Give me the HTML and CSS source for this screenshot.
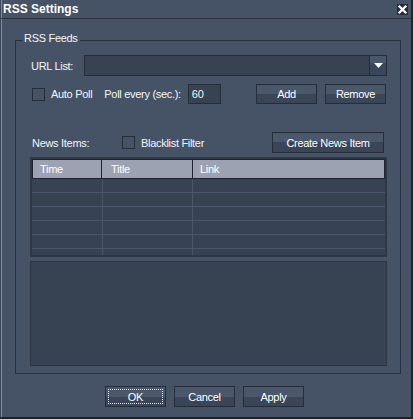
FILE: index.html
```html
<!DOCTYPE html>
<html>
<head>
<meta charset="utf-8">
<title>RSS Settings</title>
<link rel="stylesheet" href="styles.css">
</head>
<body>
<div class="window">
  <div class="titlebar">
    <span class="title">RSS Settings</span>
    <span class="close"><svg width="11" height="11" viewBox="0 0 11 11"><path d="M2.5 2.5 L8.5 8.5 M8.5 2.5 L2.5 8.5" stroke="#fff" stroke-width="2.2" stroke-linecap="square"/></svg></span>
  </div>
  <fieldset class="group">
    <legend class="legend">RSS Feeds</legend>
    <div class="group-body">
      <div class="row row-url">
        <span class="url-label">URL List:</span>
        <div class="combo">
          <div class="combo-field"></div>
          <div class="combo-btn"><svg width="9" height="5" viewBox="0 0 9 5"><polygon points="0,0 9,0 4.5,5" fill="#fff"/></svg></div>
        </div>
      </div>
      <div class="row row-poll">
        <span class="check"></span>
        <span class="check-label">Auto Poll</span>
        <span class="poll-label">Poll every (sec.):</span>
        <span class="num">60</span>
        <span class="btn btn-add">Add</span>
        <span class="btn btn-remove">Remove</span>
      </div>
      <div class="row row-news">
        <span class="news-label">News Items:</span>
        <span class="check"></span>
        <span class="check-label">Blacklist Filter</span>
        <span class="btn btn-create">Create News Item</span>
      </div>
      <div class="grid">
        <div class="grid-head">
          <div class="h-cell h-time">Time</div>
          <div class="h-cell h-title">Title</div>
          <div class="h-cell h-link">Link</div>
        </div>
        <div class="grid-row"><div class="c c1"></div><div class="c c2"></div><div class="c c3"></div></div>
        <div class="grid-row"><div class="c c1"></div><div class="c c2"></div><div class="c c3"></div></div>
        <div class="grid-row"><div class="c c1"></div><div class="c c2"></div><div class="c c3"></div></div>
        <div class="grid-row"><div class="c c1"></div><div class="c c2"></div><div class="c c3"></div></div>
        <div class="grid-row"><div class="c c1"></div><div class="c c2"></div><div class="c c3"></div></div>
        <div class="grid-fill"><div class="c c1"></div><div class="c c2"></div><div class="c c3"></div></div>
      </div>
      <div class="panel"></div>
    </div>
  </fieldset>
  <div class="actions">
    <span class="btn btn-ok">OK</span>
    <span class="btn">Cancel</span>
    <span class="btn">Apply</span>
  </div>
</div>
</body>
</html>
```

FILE: styles.css
```css
* { box-sizing: border-box; }
html, body { margin: 0; padding: 0; }
body {
  width: 413px;
  height: 419px;
  overflow: hidden;
  background: #465366;
  font-family: "Liberation Sans", Arial, sans-serif;
  font-size: 11px;
  letter-spacing: -0.3px;
  color: #f4f6f8;
}
.window {
  width: 413px;
  height: 419px;
  background: #465366;
  border-left: 1px solid #3b4657;
  border-right: 2px solid #1f2530;
  border-bottom: 2px solid #1a1f28;
  box-shadow: inset 1px 0 #7f8ca3;
  display: flex;
  flex-direction: column;
}
.titlebar {
  height: 19px;
  flex: none;
  border-bottom: 1px solid #2a313e;
  display: flex;
  justify-content: space-between;
  padding: 0 3px 0 2px;
}
.title {
  font-weight: bold;
  font-size: 12px;
  letter-spacing: 0;
  line-height: 18px;
  color: #fff;
}
.close {
  width: 11px;
  height: 11px;
  margin-top: 4px;
  background: #262d39;
  display: flex;
}
.group {
  margin: 13px 10px 0 14px;
  padding: 0;
  border: 1px solid #2a313e;
  min-width: 0;
}
.legend {
  margin-left: 6px;
  padding: 0 2px 4px;
  line-height: 12px;
  font-size: 11px;
}
.group-body {
  padding: 7px 13px 7px 14px;
  display: flex;
  flex-direction: column;
}
.row {
  display: flex;
  align-items: center;
  white-space: nowrap;
}
.row-url { height: 21px; }
.url-label { width: 54px; padding-left: 1px; }
.combo {
  flex: 1;
  height: 21px;
  display: flex;
  border: 1px solid #252c38;
}
.combo-field {
  flex: 1;
  background: #374252;
  border-right: 1px solid #252c38;
}
.combo-btn {
  width: 16px;
  background: linear-gradient(#4a576b 0 7px, #3a4659 7px);
  display: flex;
  align-items: center;
  justify-content: center;
}
.row-poll {
  margin-top: 8px;
  height: 20px;
  padding-left: 2px;
}
.check {
  width: 13px;
  height: 13px;
  flex: none;
  border: 1px solid #262d39;
  background: #465366;
}
.check-label { margin-left: 6px; }
.poll-label { margin-left: 12px; }
.num {
  margin-left: 7px;
  width: 33px;
  height: 20px;
  padding-left: 3px;
  background: #374252;
  border: 1px solid #262d39;
  display: flex;
  align-items: center;
}
.btn {
  width: 61px;
  height: 20px;
  flex: none;
  border: 1px solid #262d39;
  background: linear-gradient(#4b586c 50%, #3a4558 50%);
  color: #fff;
  display: flex;
  align-items: center;
  justify-content: center;
}
.btn-add { margin-left: auto; }
.btn-remove { margin-left: 8px; margin-right: 1px; }
.row-news {
  margin-top: 28px;
  height: 21px;
  padding-left: 2px;
}
.news-label { width: 90px; }
.btn-create {
  margin-left: auto;
  margin-right: 3px;
  width: 112px;
  height: 21px;
}
.grid {
  margin-top: 4px;
  border: 2px solid #2f3745;
  background: #374253;
}
.grid-head {
  display: flex;
  height: 20px;
  padding: 1px;
  gap: 1px;
  background: #1f2530;
}
.h-cell {
  background: #9ca2b1;
  color: #fff;
  line-height: 18px;
  padding-left: 7px;
}
.h-time { width: 68px; }
.h-title { width: 90px; padding-left: 9px; }
.h-link { flex: 1; }
.grid-row {
  display: flex;
  height: 14px;
  border-bottom: 1px solid #4a566a;
}
.grid-fill {
  display: flex;
  height: 6px;
}
.c1 { width: 71px; border-right: 1px solid #4a566a; }
.c2 { width: 90px; border-right: 1px solid #4a566a; }
.c3 { flex: 1; }
.panel {
  margin-top: 4px;
  height: 105px;
  border: 1px solid #2c3441;
  background: #374253;
}
.actions {
  margin-top: 12px;
  padding-left: 104px;
  display: flex;
  gap: 8px;
}
.actions .btn { height: 21px; }
.btn-ok {
  outline: 1px dotted #f3dde4;
  outline-offset: -4px;
}
```
